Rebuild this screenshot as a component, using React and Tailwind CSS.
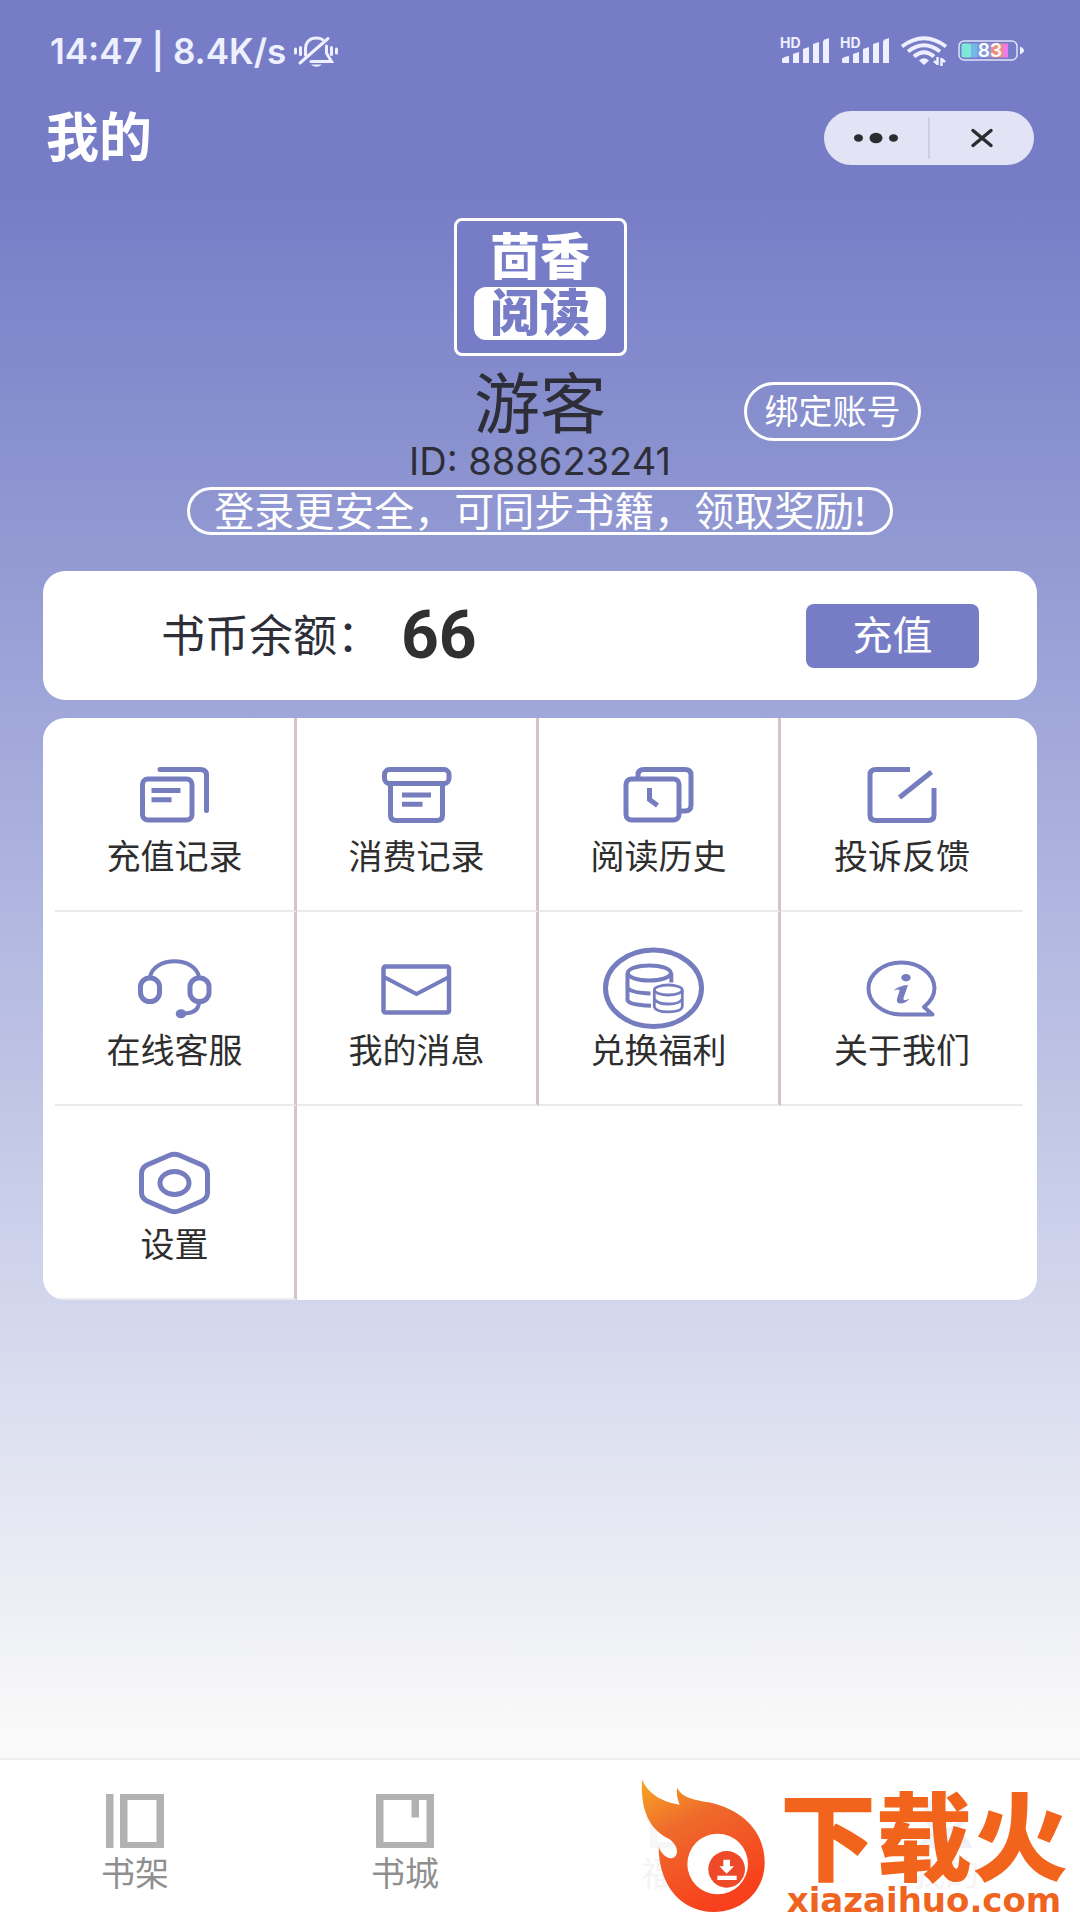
const CJK = "font-['Inter','Noto_Sans_CJK_SC',sans-serif]";

function BellOff() {
  return (
    <svg className="h-8 w-11" viewBox="0 0 44 32" fill="none" stroke="#eef0ff" strokeWidth="3" strokeLinecap="round" aria-hidden="true">
      <path d="M6 28 L34 3.500" />
      <path d="M11.500 20V14C11.500 7 16 3 22.500 3Q26 3 28.500 4.500" />
      <path d="M32.500 11V18L37.500 26.500H17" />
      <path d="M17 29.500H28Q22.500 34 17 29.500Z" fill="#eef0ff" stroke="none" />
      <path d="M1.500 14V18M6.500 12.500V19.500M37.500 12.500V19.500M42.500 14V18" />
    </svg>
  );
}

function Signal() {
  return (
    <svg className="h-7 w-[50px] overflow-visible" viewBox="0 0 50 28" fill="#eef0ff" aria-hidden="true">
      <text x="0" y="11" fontSize="14" fontWeight="700" fontFamily="Inter, sans-serif">HD</text>
      <path d="M2 22Q3 20 9 19V26H3Q2 26 2 25Z" />
      <path d="M13 17L19 15V26H13Z" />
      <path d="M23 12L29 10V26H23Z" />
      <path d="M33 7L39 5V26H33Z" />
      <path d="M43 4Q45 2 49 1V26H43Z" />
    </svg>
  );
}

function Wifi() {
  return (
    <svg className="h-[30px] w-12" viewBox="0 0 48 30" fill="none" stroke="#eef0ff" strokeWidth="4" aria-hidden="true">
      <path d="M2 10.500Q24 -6 46 10.500" />
      <path d="M8 15.500Q24 3 40 15.500" />
      <path d="M14 20.500Q24 12 34 20.500" />
      <path d="M19 24.500Q24 20 29 24.500L24 29Z" fill="#eef0ff" stroke="none" />
      <path d="M37.500 21V29M41.500 22V30M37.500 28L34 25M41.500 23L45 26" strokeWidth="2.500" />
    </svg>
  );
}

function Battery() {
  return (
    <svg className="h-6 w-[68px]" viewBox="0 0 68 24" aria-label="83%">
      <rect x="1" y="2" width="58" height="19" rx="5" fill="none" stroke="#dfe2fb" strokeWidth="1.500" />
      <rect x="3.500" y="4.500" width="10" height="14" rx="2" fill="#7ee8d8" />
      <rect x="13" y="4.500" width="6" height="14" fill="#74b8e8" />
      <rect x="19" y="4.500" width="14" height="14" fill="#7e9be0" />
      <rect x="33" y="4.500" width="12" height="14" fill="#ee9080" />
      <rect x="45" y="4.500" width="5" height="14" fill="#f07ae8" />
      <path d="M62 7.500Q70 11.500 62 15.500Z" fill="#eef0ff" />
      <text x="32" y="18" textAnchor="middle" fontSize="19" fontWeight="600" fontFamily="Inter, sans-serif" fill="#fff">83</text>
    </svg>
  );
}

const icons = {
  recharge: (
    <>
      <rect x="21.500" y="26" width="49.500" height="41" rx="5.500" />
      <path d="M39 16.500H79Q85.500 16.500 85.500 22V57.500" strokeLinecap="round" />
      <path d="M30.500 37.500H59.500M30.500 46.700H50.500" />
    </>
  ),
  spend: (
    <>
      <rect x="21.500" y="16.500" width="64.500" height="14" rx="5" />
      <path d="M27.500 30V62Q27.500 67.500 33 67.500H74Q79.500 67.500 79.500 62V30" />
      <path d="M39 42H68M39 51.300H59.500" />
    </>
  ),
  history: (
    <>
      <rect x="21" y="26" width="53" height="41" rx="5.500" />
      <path d="M33 25V22Q33 16.500 39 16.500H80Q86 16.500 86 22V52Q86 58 80 58H75" />
      <path d="M44.500 35V46.500L52.500 52.500" />
    </>
  ),
  feedback: (
    <>
      <path d="M62 16.500H28Q22 16.500 22 22V62Q22 67.500 28 67.500H80Q86 67.500 86 62V35" />
      <path d="M51.500 44.500L83.500 19" />
    </>
  ),
  service: (
    <>
      <path d="M29 30C33 9 74 9 78 30" strokeWidth="4" />
      <rect x="19.500" y="31" width="19" height="23.500" rx="9" />
      <rect x="69" y="31" width="19" height="23.500" rx="9" />
      <path d="M78 56Q77 66.500 62 66.500" strokeWidth="4" />
      <ellipse cx="60" cy="66.700" rx="5.300" ry="4.500" fill="#767dbe" stroke="none" />
    </>
  ),
  message: (
    <g strokeWidth="4.500">
      <rect x="20.500" y="19.500" width="65.500" height="46" rx="2" />
      <path d="M21 30L53.500 47L86 30" strokeWidth="4" />
    </g>
  ),
  welfare: (
    <>
      <ellipse cx="48.500" cy="41.300" rx="48" ry="38.200" />
      <g strokeWidth="4">
        <ellipse cx="44.300" cy="26" rx="21.500" ry="7.500" />
        <path d="M22.500 26V53Q23 58 46 58.700M22.500 41Q27 46 45.500 46.500M66.300 26V35.500" />
      </g>
      <g strokeWidth="2.800">
        <ellipse cx="63.300" cy="43" rx="14" ry="5" />
        <path d="M49.300 43V60Q51 64.800 63.300 64.800Q76 64.800 77.300 60V43M49.300 52Q52 57 63.300 57Q75 57 77.300 52" />
      </g>
    </>
  ),
  about: (
    <>
      <path d="M53 67.500H84.500L76 60Q86.500 51.500 86.500 41A33 26 0 1 0 53 67.500Z" strokeWidth="4" strokeLinejoin="round" />
      <g fill="#767dbe" stroke="none">
        <ellipse cx="58" cy="30.700" rx="4.700" ry="3.700" />
        <path d="M45.500 43.500Q51 38.500 60 38L55.500 51Q54.500 55 61.500 51.500Q58 56.500 52 56.500Q47.500 56 49.500 50L51.500 44Q52 41.500 45.500 43.500Z" />
      </g>
    </>
  ),
  settings: (
    <>
      <path d="M48 14.500Q53.500 12 59 14.500L81 24Q86.500 27 86.500 32.500V51.500Q86.500 57 81 60L59 69.500Q53.500 72 48 69.500L26 60Q20.500 57 20.500 51.500V32.500Q20.500 27 26 24Z" />
      <ellipse cx="53.500" cy="42" rx="14.500" ry="11.500" />
    </>
  ),
};

const menu = [
  ["recharge", "充值记录"],
  ["spend", "消费记录"],
  ["history", "阅读历史"],
  ["feedback", "投诉反馈"],
  ["service", "在线客服"],
  ["message", "我的消息"],
  ["welfare", "兑换福利"],
  ["about", "关于我们"],
  ["settings", "设置"],
];

function MenuItem({ icon, label, last }) {
  return (
    <button
      type="button"
      className={
        "flex h-[194px] flex-col items-center border-b-2 border-b-[#ebebeb] pt-[35px] " +
        (last ? "" : "border-r-[3px] border-r-[#d3c5c7]")
      }
    >
      <svg className="h-[84px] w-[108px] overflow-visible" viewBox="0 0 108 84" fill="none" stroke="#767dbe" strokeWidth="5" aria-hidden="true">
        {icons[icon]}
      </svg>
      <span className="text-[34px] leading-10 text-[#2e2e2e]">{label}</span>
    </button>
  );
}

const tabs = [
  ["书架", <path key="i" fillRule="evenodd" d="M0 0H7.500V54H0ZM14 0H58V54H14ZM21.500 6V48H50.500V6Z" />],
  ["书城", <path key="i" fillRule="evenodd" d="M0 0H58V54H0ZM7.500 6V48H50.500V6H43V23.500H35.500V6Z" />],
  ["福利", <path key="i" fillRule="evenodd" d="M0 10H58V27H0ZM4 30H54V54H4ZM11 36V48H47V36Z" />],
  ["我的", <path key="i" fill="#767dc6" fillRule="evenodd" d="M29 0A22 20 0 0 1 40 37Q52 41 56 54H2Q6 41 18 37A22 20 0 0 1 29 0ZM29 6A15 14 0 1 0 29.100 6Z" />],
];

function Watermark() {
  return (
    <div className="absolute right-0 bottom-0 flex h-[148px] w-[442px] items-center bg-white/90">
      <svg className="h-[138px] w-[130px] shrink-0" viewBox="118 118 390 414" aria-hidden="true">
        <defs>
          <linearGradient id="flame" x1="0" y1="0" x2="0.500" y2="1">
            <stop offset="0" stopColor="#f7a823" />
            <stop offset="0.400" stopColor="#ee6a2c" />
            <stop offset="1" stopColor="#f8401c" />
          </linearGradient>
        </defs>
        <path
          fill="url(#flame)"
          d="M130 125C150 175 200 195 243 201C236 185 232 165 236 150C250 182 290 186 330 194C430 215 498 280 498 375C498 460 430 523 345 523C250 523 180 445 180 328C190 352 205 362 220 362C242 355 240 325 213 305C150 275 125 215 130 125Z"
        />
        <circle cx="357" cy="379" r="91" fill="#fff" />
        <circle cx="384" cy="395" r="55" fill="#ee4a2a" />
        <path fill="#fff" d="M374 366H394V386H406L384 408L362 386H374ZM356 414H414V427H356Z" />
      </svg>
      <div className="flex flex-1 flex-col items-center self-end pb-1">
        <span className="text-[96px] leading-[92px] font-black text-[#f2641c]">下载火</span>
        <span className="font-['DejaVu_Sans',sans-serif] text-[34px] leading-8 font-bold text-[#ee6420]">xiazaihuo.com</span>
      </div>
    </div>
  );
}

export default function App() {
  return (
    <div className={"flex min-h-screen flex-col bg-[#f9f9f9] bg-linear-to-b from-[#767dc6] from-10% to-[#f9f9f9] to-90% text-[#2e2e38] " + CJK}>
      <div className="flex h-[102px] items-center justify-between pr-[54px] pl-[50px] text-[#eef0ff]">
        <div className="flex items-center gap-2">
          <span className="text-[35px] leading-10 font-semibold">14:47 | 8.4K/s</span>
          <BellOff />
        </div>
        <div className="flex items-center gap-2.5">
          <Signal />
          <Signal />
          <Wifi />
          <Battery />
        </div>
      </div>

      <header className="flex h-[72px] items-center justify-between px-[46px]">
        <h1 className="text-[53px] leading-[76px] font-bold text-white">我的</h1>
        <div className="flex h-[54px] w-[210px] items-center rounded-full bg-[#e2e4f5] text-[#2c2c30]">
          <button type="button" aria-label="更多" className="flex h-[42px] flex-1 items-center justify-center border-r-2 border-[#cdd0e0]">
            <svg className="h-3 w-11" viewBox="0 0 44 12" fill="currentColor" aria-hidden="true">
              <ellipse cx="4.500" cy="6" rx="4.500" ry="3.800" />
              <ellipse cx="22" cy="6" rx="6.500" ry="5.300" />
              <ellipse cx="39.500" cy="6" rx="4.500" ry="3.800" />
            </svg>
          </button>
          <button type="button" aria-label="关闭" className="flex h-[42px] flex-1 items-center justify-center">
            <svg className="h-5 w-6" viewBox="0 0 24 20" stroke="currentColor" strokeWidth="3.500" strokeLinecap="round" aria-hidden="true">
              <path d="M3 2.500L21 17.500M21 2.500L3 17.500" />
            </svg>
          </button>
        </div>
      </header>

      <main className="flex flex-col px-[43px] pt-11">
        <section className="flex flex-col items-center">
          <div className="flex h-[138px] w-[173px] flex-col items-center gap-1 rounded-lg border-[3px] border-white bg-[#767dc6] pt-2.5">
            <span className="text-[50px] leading-[52px] font-black text-white">茴香</span>
            <span className="h-[53px] rounded-xl bg-white px-4 text-[50px] leading-[52px] font-black text-[#767dc6]">阅读</span>
          </div>
          <div className="grid w-full grid-cols-[1fr_auto_1fr]">
            <h2 className="col-start-2 h-[85px] text-[66px] leading-[96px]">游客</h2>
            <button type="button" className="ml-[138px] h-[59px] w-[177px] self-end rounded-full border-[3px] border-white text-[34px] leading-[52px] text-white">
              绑定账号
            </button>
          </div>
          <p className="text-[38px] leading-10">ID: 888623241</p>
          <p className="mt-1.5 h-12 rounded-full border-[3px] border-white px-6 text-[40px] leading-[43px] text-white">
            登录更安全，可同步书籍，领取奖励!
          </p>
        </section>

        <section className="mt-9 flex h-[129px] items-center rounded-[22px] bg-white pr-[58px] pl-[118px]">
          <span className="text-[44px] leading-[64px]">书币余额：</span>
          <strong className="ml-5 font-['Roboto',sans-serif] text-[66px] leading-[64px] font-bold text-[#303030]">66</strong>
          <button type="button" className="ml-auto h-16 w-[173px] rounded-lg bg-[#767dc6] text-[40px] leading-[64px] text-white">
            充值
          </button>
        </section>

        <nav aria-label="功能" className="mt-[18px] grid grid-cols-4 overflow-hidden rounded-[22px] bg-white pr-3.5 pl-3">
          {menu.map(([icon, label], i) => (
            <MenuItem key={label} icon={icon} label={label} last={i % 4 === 3} />
          ))}
        </nav>
      </main>

      <footer className="relative mt-auto border-t-2 border-[#f0f0f0] bg-white">
        <nav aria-label="主导航" className="grid h-[160px] grid-cols-4">
          {tabs.map(([label, shape]) => (
            <a key={label} href="#" className="flex flex-col items-center pt-[34px] text-[#8f8f8f]">
              <svg className="h-[54px] w-[58px]" viewBox="0 0 58 54" fill="#b2b2b2" aria-hidden="true">
                {shape}
              </svg>
              <span className="mt-2 text-[34px] leading-9">{label}</span>
            </a>
          ))}
        </nav>
        <Watermark />
      </footer>
    </div>
  );
}
